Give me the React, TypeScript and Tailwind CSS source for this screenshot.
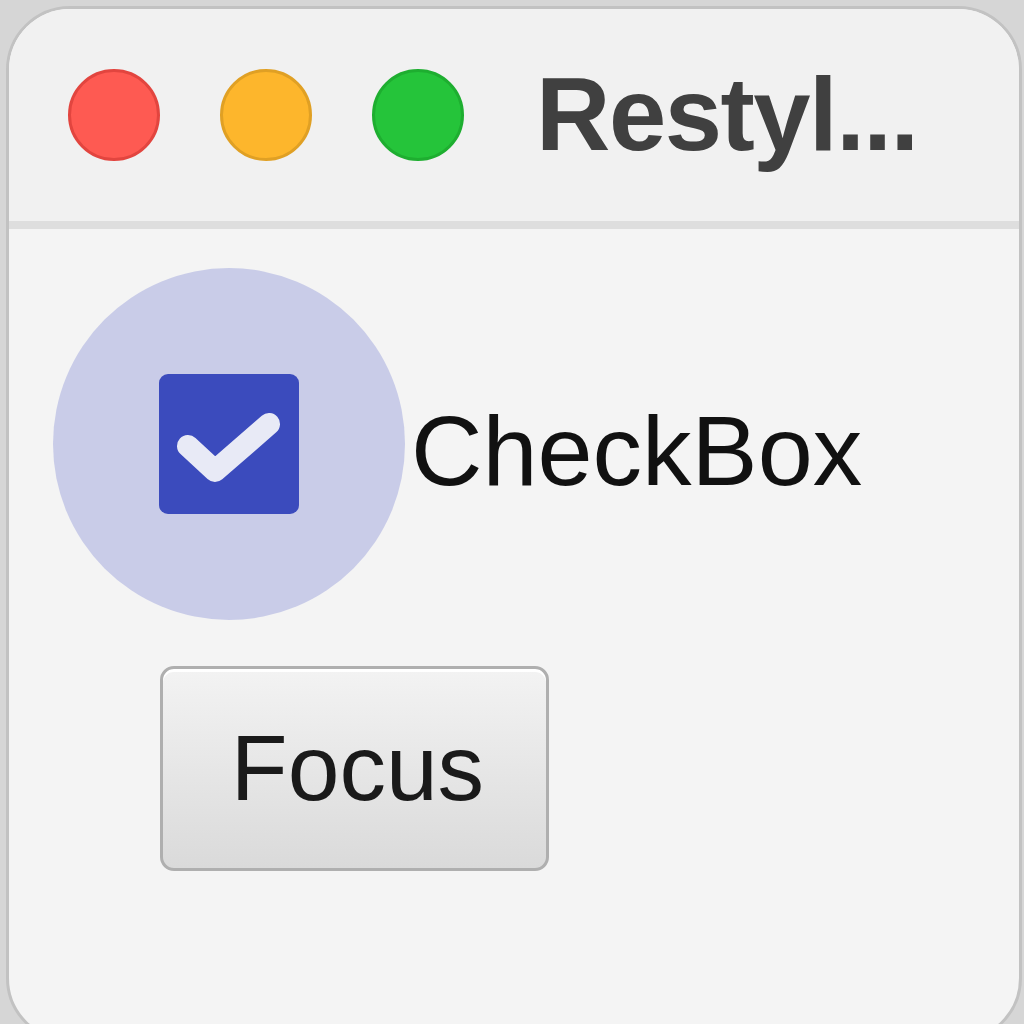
export default function App() {
  return (
    <div className="w-[1024px] h-[1024px] overflow-hidden bg-[#d6d6d6] pt-[6px] pl-[6px]">
      <div className="w-[1016px] h-[1036px] rounded-[64px] border-[3px] border-[#c2c2c2] bg-[#f4f4f4] overflow-hidden font-['Liberation_Sans',Arial,sans-serif]">
        {/* title bar */}
        <div className="h-[220px] bg-[#f1f1f1] border-b-[8px] border-[#dedede] flex items-center pl-[59px]">
          <div className="flex gap-[60px]">
            <span className="w-[92px] h-[92px] rounded-full bg-[#fe5a52] border-[3px] border-[#e2453f]" />
            <span className="w-[92px] h-[92px] rounded-full bg-[#fdb62c] border-[3px] border-[#e0a024]" />
            <span className="w-[92px] h-[92px] rounded-full bg-[#25c43a] border-[3px] border-[#1eae30]" />
          </div>
          <span className="ml-[72px] text-[103px] leading-none font-bold text-[#404040] tracking-[-1.5px] -mt-[2px]">
            Restyl...
          </span>
        </div>

        {/* content */}
        <div className="flex flex-col pl-[44px] pt-[39px]">
          <div className="flex items-center">
            <div className="w-[352px] h-[352px] rounded-full bg-[#c9cce8] flex items-center justify-center">
              <div className="w-[140px] h-[140px] rounded-[9px] bg-[#3b4bbd]">
                <svg width="140" height="140" viewBox="0 0 140 140">
                  <path d="M29 72 L56 97 L110 50" fill="none" stroke="#e8eaf6" strokeWidth="22" strokeLinecap="round" strokeLinejoin="round" />
                </svg>
              </div>
            </div>
            <span className="ml-[6px] mt-[12px] text-[99px] leading-none text-[#111]">CheckBox</span>
          </div>

          <button className="mt-[46px] ml-[107px] w-[389px] h-[205px] rounded-[14px] border-[3px] border-[#afafaf] bg-gradient-to-b from-[#f3f3f3] to-[#dadada] shadow-[inset_0_3px_0_#ffffff] flex items-center justify-center">
            <span className="text-[93px] leading-none text-[#1a1a1a] pl-[6px]">Focus</span>
          </button>
        </div>
      </div>
    </div>
  );
}
